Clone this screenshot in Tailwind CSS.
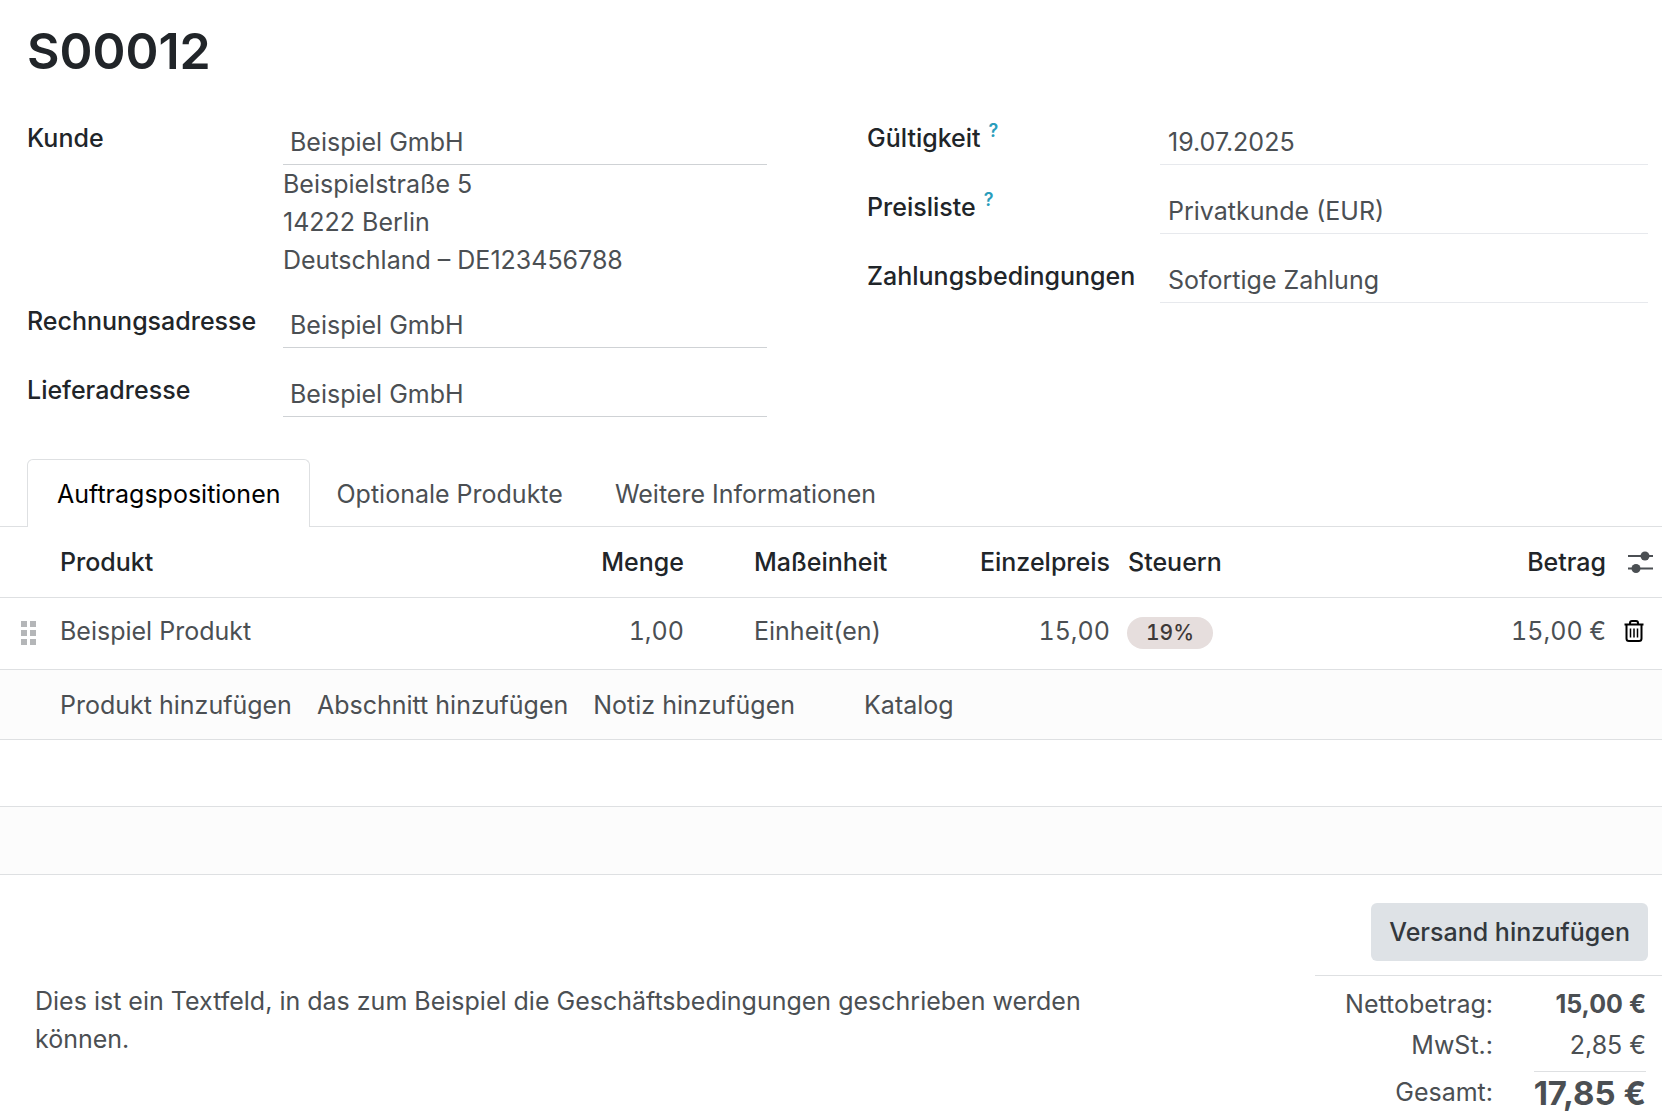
<!DOCTYPE html>
<html lang="de">
<head>
	<meta charset="UTF-8">
	<meta name="viewport" content="width=device-width, initial-scale=1.0">
	<title>S00012</title>
	<script src="https://cdn.jsdelivr.net/npm/@tailwindcss/browser@4"></script>
</head>
<body class="bg-white font-['Inter',sans-serif] text-[25px] leading-[38px] text-[#4b4f53]">
	<h1 class="pt-[21px] pl-[27px] text-[50px] leading-[60px] font-semibold text-[#212529]">S00012</h1>

	<form class="mt-[38px] grid grid-cols-[740fr_781fr] gap-[100px] pl-[27px] pr-[14px]">
		<div class="grid grid-cols-[256px_1fr] content-start gap-y-[23px]">
			<label for="customer" class="font-medium text-[#212529]">Kunde</label>
			<div>
				<input id="customer" type="text" value="Beispiel GmbH" class="block w-full border-b border-[#cfd2d5] px-[7px] pt-1 pb-[3px] outline-none">
				<address class="not-italic">
					Beispielstraße 5<br>
					14222 Berlin<br>
					Deutschland – DE123456788
				</address>
			</div>
			<label for="invoice" class="font-medium text-[#212529]">Rechnungsadresse</label>
			<input id="invoice" type="text" value="Beispiel GmbH" class="block w-full border-b border-[#cfd2d5] px-[7px] pt-1 pb-[3px] outline-none">
			<label for="delivery" class="font-medium text-[#212529]">Lieferadresse</label>
			<input id="delivery" type="text" value="Beispiel GmbH" class="block w-full border-b border-[#cfd2d5] px-[7px] pt-1 pb-[3px] outline-none">
		</div>

		<div class="grid grid-cols-[293px_1fr] content-start gap-y-[23px]">
			<label for="validity" class="flex gap-2 font-medium text-[#212529]">Gültigkeit <sup class="top-0 pt-px text-[18px] leading-[22px] font-semibold text-[#2a9dbb]">?</sup></label>
			<input id="validity" type="text" value="19.07.2025" class="block w-full border-b border-[#e7e9ed] px-2 pt-1 pb-[3px] outline-none">
			<label for="pricelist" class="flex gap-2 font-medium text-[#212529]">Preisliste <sup class="top-0 pt-px text-[18px] leading-[22px] font-semibold text-[#2a9dbb]">?</sup></label>
			<input id="pricelist" type="text" value="Privatkunde (EUR)" class="block w-full border-b border-[#e7e9ed] px-2 pt-1 pb-[3px] outline-none">
			<label for="terms" class="font-medium text-[#212529]">Zahlungsbedingungen</label>
			<input id="terms" type="text" value="Sofortige Zahlung" class="block w-full border-b border-[#e7e9ed] px-2 pt-1 pb-[3px] outline-none">
		</div>
	</form>

	<div role="tablist" class="mt-[42px] flex border-b border-[#dee0e2] pl-[27px]">
		<button role="tab" aria-selected="true" class="-mb-px rounded-t-[6px] border border-b-0 border-[#dee0e2] bg-white px-[29px] pt-[15px] pb-[14px] text-black">Auftragspositionen</button>
		<button role="tab" class="px-[26px] pt-4 pb-[13px]">Optionale Produkte</button>
		<button role="tab" class="px-[26px] pt-4 pb-[13px]">Weitere Informationen</button>
	</div>

	<table class="w-full table-fixed border-collapse">
		<colgroup>
			<col class="w-[51px]">
			<col>
			<col class="w-[142px]">
			<col class="w-[222px]">
			<col class="w-[204px]">
			<col class="w-[280px]">
			<col class="w-[216px]">
			<col class="w-[47px]">
		</colgroup>
		<thead>
			<tr class="h-[70px] border-b border-[#dee0e2] text-left text-[#212529]">
				<th></th>
				<th class="px-[9px] font-medium">Produkt</th>
				<th class="px-[9px] text-right font-medium">Menge</th>
				<th class="pl-[61px] font-medium">Maßeinheit</th>
				<th class="px-[9px] text-right font-medium">Einzelpreis</th>
				<th class="px-[9px] font-medium">Steuern</th>
				<th class="px-[9px] text-right font-medium">Betrag</th>
				<th class="pl-[13px]">
					<button aria-label="Spalten" class="block">
						<svg class="h-[24px] w-[25px]" viewBox="0 0 25 24" fill="#4b4f53">
							<rect y="5" width="25" height="2"/>
							<circle cx="17" cy="6" r="4.5"/>
							<rect y="17.500" width="25" height="2"/>
							<circle cx="8" cy="18.500" r="4.500"/>
						</svg>
					</button>
				</th>
			</tr>
		</thead>
		<tbody>
			<tr class="h-[72px] border-b border-[#dee0e2]">
				<td class="pl-[21px]">
					<button aria-label="Verschieben" class="block">
						<svg class="h-6 w-[15px]" viewBox="0 0 15 24" fill="#b4b6b8">
							<rect width="6" height="6"/><rect x="9" width="6" height="6"/>
							<rect y="9" width="6" height="6"/><rect x="9" y="9" width="6" height="6"/>
							<rect y="18" width="6" height="6"/><rect x="9" y="18" width="6" height="6"/>
						</svg>
					</button>
				</td>
				<td class="px-[9px] pb-1">Beispiel Produkt</td>
				<td class="px-[9px] pb-1 text-right tabular-nums">1,00</td>
				<td class="pb-1 pl-[61px]">Einheit(en)</td>
				<td class="px-[9px] pb-1 text-right tabular-nums">15,00</td>
				<td class="px-2"><span class="block w-fit rounded-full bg-[#e6dedd] px-[19px] text-[21px] leading-8 font-medium text-[#3d3837] tabular-nums">19%</span></td>
				<td class="px-[9px] pb-1 text-right tabular-nums">15,00 €</td>
				<td class="pb-1 pl-[9px]">
					<button aria-label="Löschen" class="block">
						<svg class="h-[22px] w-[20px]" viewBox="0 0 20 22" fill="none" stroke="#000" stroke-width="2">
							<path d="M0.500 4.500H19.500M6 4.500V3Q6 1 8 1H12Q14 1 14 3V4.500M2.500 4.500V18.500Q2.500 21 5 21H15Q17.500 21 17.500 18.500V4.500"/>
							<path d="M6.500 8.500V17.500M10 8.500V17.500M13.500 8.500V17.500" stroke-width="1.500"/>
						</svg>
					</button>
				</td>
			</tr>
			<tr class="h-[70px] border-b border-[#dee0e2] bg-[#fcfcfc]">
				<td></td>
				<td colspan="7" class="px-[9px] pt-[2px]">
					<div class="flex gap-[25px]">
						<a href="#">Produkt hinzufügen</a>
						<a href="#">Abschnitt hinzufügen</a>
						<a href="#">Notiz hinzufügen</a>
						<button class="ml-[44px]">Katalog</button>
					</div>
				</td>
			</tr>
			<tr class="h-[67px] border-b border-[#dee0e2]"><td colspan="8"></td></tr>
			<tr class="h-[68px] border-b border-[#dee0e2] bg-[#fcfcfc]"><td colspan="8"></td></tr>
		</tbody>
	</table>

	<div class="flex items-start justify-between">
		<textarea aria-label="Geschäftsbedingungen" rows="2" class="mt-[107px] ml-[35px] w-[65%] resize-none overflow-hidden outline-none">Dies ist ein Textfeld, in das zum Beispiel die Geschäftsbedingungen geschrieben werden können.</textarea>
		<div class="mt-[28px] flex w-[347px] flex-col">
			<button class="mr-[14px] self-end rounded-[6px] bg-[#dee2e6] px-[18px] py-[10px] font-medium whitespace-nowrap text-[#33383d]">Versand hinzufügen</button>
			<dl class="mt-[14px] grid grid-cols-[178px_1fr] border-t border-[#dee0e2] pt-[9px] pr-4 text-right">
				<dt>Nettobetrag:</dt>
				<dd class="font-bold">15,00 €</dd>
				<dt class="pt-[3px]">MwSt.:</dt>
				<dd class="pt-[3px]">2,85 €</dd>
				<dt class="pt-[9px]">Gesamt:</dt>
				<dd class="mt-[7px] ml-auto border-t border-[#dee0e2] text-[33px] leading-[42px] font-bold">17,85 €</dd>
			</dl>
		</div>
	</div>
</body>
</html>
